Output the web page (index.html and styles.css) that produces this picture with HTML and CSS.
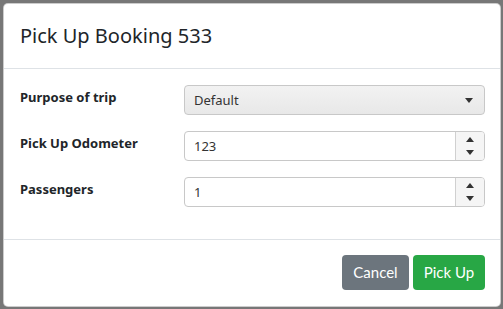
FILE: index.html
```html
<!DOCTYPE html>
<html lang="en">
<head>
<meta charset="utf-8">
<title>Pick Up Booking 533</title>
<link rel="stylesheet" href="styles.css">
</head>
<body>
<div class="backdrop">
  <div class="modal">
    <div class="modal-header">
      <h5 class="modal-title">Pick Up Booking 533</h5>
    </div>
    <div class="modal-body">
      <div class="form-row">
        <label class="form-label">Purpose of trip</label>
        <div class="select">
          <span class="control-text">Default</span>
          <svg class="caret" width="8" height="5" viewBox="0 0 8 5"><path d="M0 0H8L4 5Z" fill="#333"/></svg>
        </div>
      </div>
      <div class="form-row">
        <label class="form-label">Pick Up Odometer</label>
        <div class="number">
          <span class="control-text">123</span>
          <div class="spinner">
            <svg width="8" height="5" viewBox="0 0 8 5"><path d="M0 5H8L4 0Z" fill="#333"/></svg>
            <svg width="8" height="5" viewBox="0 0 8 5"><path d="M0 0H8L4 5Z" fill="#333"/></svg>
          </div>
        </div>
      </div>
      <div class="form-row">
        <label class="form-label">Passengers</label>
        <div class="number">
          <span class="control-text">1</span>
          <div class="spinner">
            <svg width="8" height="5" viewBox="0 0 8 5"><path d="M0 5H8L4 0Z" fill="#333"/></svg>
            <svg width="8" height="5" viewBox="0 0 8 5"><path d="M0 0H8L4 5Z" fill="#333"/></svg>
          </div>
        </div>
      </div>
    </div>
    <div class="modal-footer">
      <button class="btn btn-secondary">Cancel</button>
      <button class="btn btn-success">Pick Up</button>
    </div>
  </div>
</div>
</body>
</html>
```
FILE: styles.css
```css
* { box-sizing: border-box; }
html, body {
  margin: 0;
  padding: 0;
  background: #777777;
  font-family: "Noto Sans", "Open Sans", sans-serif;
  color: #212529;
  overflow: hidden;
}
.backdrop {
  padding: 3px 2px 2px 3px;
  height: 309px;
}
.modal {
  width: 498px;
  height: 304px;
  background: #fff;
  border: 1px solid rgba(0,0,0,.2);
  border-radius: 5px;
  display: flex;
  flex-direction: column;
}
.modal-header {
  padding: 17px 16px;
  border-bottom: 1px solid #dee2e6;
}
.modal-title {
  margin: 0;
  font-size: 20px;
  line-height: 30px;
  font-weight: 400;
  color: #212529;
}
.modal-body {
  padding: 16px 15px 32px 16px;
  display: flex;
  flex-direction: column;
  gap: 16px;
  border-bottom: 1px solid #dee2e6;
}
.form-row {
  display: grid;
  grid-template-columns: 164px 1fr;
  height: 30px;
}
.form-label {
  font-size: 13px;
  font-weight: 700;
  line-height: 18px;
  padding-top: 3px;
  color: #212529;
}
.select, .number {
  display: flex;
  align-items: center;
  border: 1px solid #c8c8c8;
  border-radius: 4px;
  height: 30px;
  font-size: 13px;
  color: #333;
}
.select {
  background: linear-gradient(#f2f2f2, #e8e8e8);
  padding: 0 11px 0 9px;
  justify-content: space-between;
}
.number {
  background: #fff;
  padding-left: 9px;
  justify-content: space-between;
}
.control-text { line-height: 18px; }
.spinner {
  width: 29px;
  height: 100%;
  border-left: 1px solid #d0d0d0;
  background: #f5f5f5;
  border-radius: 0 3px 3px 0;
  display: flex;
  flex-direction: column;
  align-items: center;
  justify-content: center;
  gap: 8px;
}
.spinner svg { display: block; }
.modal-footer {
  display: flex;
  justify-content: flex-end;
  align-items: flex-start;
  gap: 4px;
  padding: 15px 15px 0 16px;
}
.btn {
  font-family: "Lato", "Noto Sans", sans-serif;
  font-size: 15px;
  height: 35px;
  border: 0;
  border-radius: 4px;
  color: #fff;
  padding: 0;
  line-height: 35px;
  white-space: nowrap;
  text-align: center;
}
.btn-secondary { background: #6c757d; width: 67px; }
.btn-success { background: #28a745; width: 72px; }
```
